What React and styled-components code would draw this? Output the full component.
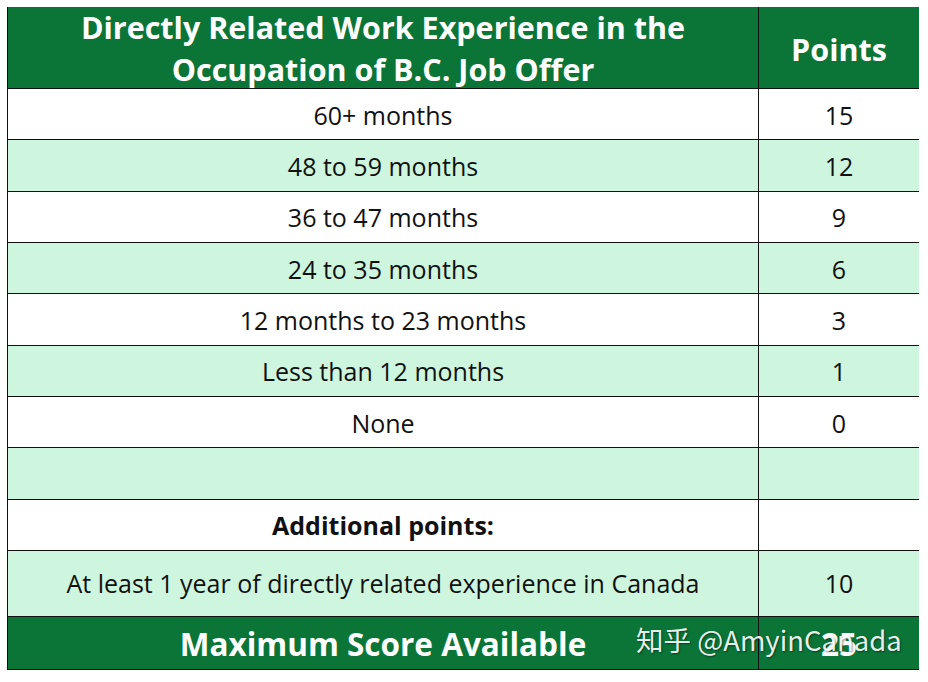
import React from "react"
import styled, { createGlobalStyle } from "styled-components"

const GlobalStyle = createGlobalStyle`
  html, body {
    margin: 0;
    padding: 0;
    background: #ffffff;
  }
  body {
    font-family: "Open Sans", "Noto Sans", sans-serif;
  }
`

const rows = [
  { label: "60+ months", points: "15" },
  { label: "48 to 59 months", points: "12" },
  { label: "36 to 47 months", points: "9" },
  { label: "24 to 35 months", points: "6" },
  { label: "12 months to 23 months", points: "3" },
  { label: "Less than 12 months", points: "1" },
  { label: "None", points: "0" },
  { label: "", points: "" },
  { label: "Additional points:", points: "", bold: true },
]

export default function App() {
  return (
    <>
      <GlobalStyle />
      <Page>
        <Table>
          <HeaderCell>
            Directly Related Work Experience in the
            <br />
            Occupation of B.C. Job Offer
          </HeaderCell>
          <HeaderCell $narrow>Points</HeaderCell>

          {rows.map((row, i) => (
            <React.Fragment key={i}>
              <Cell $tint={i % 2 === 1} $bold={row.bold}>
                {row.label}
              </Cell>
              <Cell $tint={i % 2 === 1} $narrow>
                {row.points}
              </Cell>
            </React.Fragment>
          ))}

          <Cell $tint $tall>
            At least 1 year of directly related experience in Canada
          </Cell>
          <Cell $tint $tall $narrow>
            10
          </Cell>

          <FooterCell>Maximum Score Available</FooterCell>
          <FooterCell $narrow>25</FooterCell>
        </Table>
        <Watermark>知乎 @AmyinCanada</Watermark>
      </Page>
    </>
  )
}

const Page = styled.div`
  position: relative;
  width: 928px;
  height: 682px;
  padding: 7px 0 0 7px;
  box-sizing: border-box;
`
const Table = styled.div`
  display: grid;
  grid-template-columns: 751px 160px;
  grid-template-rows: 82px repeat(9, 51.33px) 66px 52px;
  width: 912px;
  border: 1px solid #111;
  border-top: none;
  box-sizing: border-box;
`
const CellBase = styled.div`
  display: flex;
  align-items: center;
  justify-content: center;
  text-align: center;
  box-sizing: border-box;
  border-bottom: 1px solid #111;
  border-right: ${(p) => (p.$narrow ? "none" : "1px solid #111")};
`
const HeaderCell = styled(CellBase)`
  background: #0b7538;
  color: #ffffff;
  font-size: 30.5px;
  font-weight: 700;
  line-height: 42px;
  padding-top: ${(p) => (p.$narrow ? "2px" : "0")};
`
const Cell = styled(CellBase)`
  background: ${(p) => (p.$tint ? "#cef5de" : "#ffffff")};
  color: #111;
  font-size: 25px;
  font-weight: ${(p) => (p.$bold ? 700 : 400)};
  padding-top: ${(p) => (p.$tall ? "0" : "1px")};
`
const FooterCell = styled(CellBase)`
  background: #0b7538;
  color: #ffffff;
  font-size: 31.5px;
  font-weight: 700;
  border-bottom: none;
  padding-top: 2px;
`
const Watermark = styled.div`
  position: absolute;
  left: 636px;
  top: 620px;
  font-family: "Noto Sans CJK SC", "Noto Sans", sans-serif;
  font-size: 27.5px;
  line-height: 38px;
  color: rgba(255, 255, 255, 0.92);
  text-shadow: 1px 1px 2px rgba(0, 0, 0, 0.45);
  white-space: nowrap;
`
